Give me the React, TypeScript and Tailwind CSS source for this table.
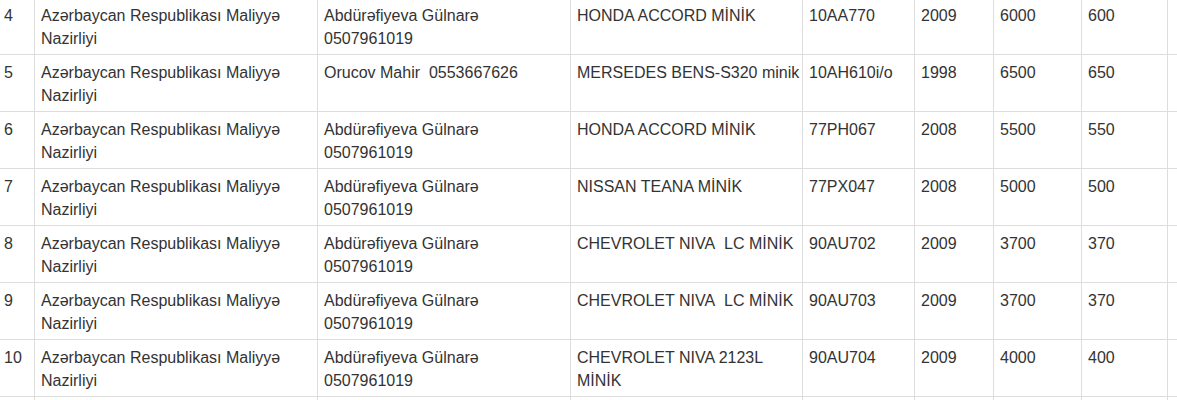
const rows = [
  ["4", "Azərbaycan Respublikası Maliyyə Nazirliyi", "Abdürəfiyeva Gülnarə 0507961019", "HONDA ACCORD MİNİK", "10AA770", "2009", "6000", "600"],
  ["5", "Azərbaycan Respublikası Maliyyə Nazirliyi", "Orucov Mahir\u00a0 0553667626", "MERSEDES BENS-S320 minik", "10AH610i/o", "1998", "6500", "650"],
  ["6", "Azərbaycan Respublikası Maliyyə Nazirliyi", "Abdürəfiyeva Gülnarə 0507961019", "HONDA ACCORD MİNİK", "77PH067", "2008", "5500", "550"],
  ["7", "Azərbaycan Respublikası Maliyyə Nazirliyi", "Abdürəfiyeva Gülnarə 0507961019", "NISSAN TEANA MİNİK", "77PX047", "2008", "5000", "500"],
  ["8", "Azərbaycan Respublikası Maliyyə Nazirliyi", "Abdürəfiyeva Gülnarə 0507961019", "CHEVROLET NIVA\u00a0 LC MİNİK", "90AU702", "2009", "3700", "370"],
  ["9", "Azərbaycan Respublikası Maliyyə Nazirliyi", "Abdürəfiyeva Gülnarə 0507961019", "CHEVROLET NIVA\u00a0 LC MİNİK", "90AU703", "2009", "3700", "370"],
  ["10", "Azərbaycan Respublikası Maliyyə Nazirliyi", "Abdürəfiyeva Gülnarə 0507961019", "CHEVROLET NIVA 2123L MİNİK", "90AU704", "2009", "4000", "400"],
];

const widths = [37, 283, 253, 232, 112, 79, 88, 86, 120];

export default function App() {
  return (
    <div className="h-[400px] w-full overflow-hidden bg-white">
      <table
        className="-mt-[3px] -ml-[3px] w-[1290px] table-fixed border-collapse text-[16px] leading-[22.8px] text-[#333]"
        style={{ fontFamily: '"Liberation Sans", Arial, sans-serif' }}
      >
        <colgroup>
          {widths.map((w, i) => (
            <col key={i} style={{ width: `${w}px` }} />
          ))}
        </colgroup>
        <tbody>
          {rows.map((row) => (
            <tr key={row[0]}>
              {row.map((cell, i) => (
                <td
                  key={i}
                  className="h-[57px] border border-[#dddddd] pt-[7px] pr-[2px] pb-[3px] pl-[6px] align-top"
                >
                  {cell}
                </td>
              ))}
              <td className="border border-[#dddddd] pt-[7px] pr-[2px] pb-[3px] pl-[6px] align-top" />
            </tr>
          ))}
          <tr>
            {widths.map((_, i) => (
              <td key={i} className="h-[57px] border border-[#dddddd] pt-[7px] pr-[2px] pb-[3px] pl-[6px] align-top" />
            ))}
          </tr>
        </tbody>
      </table>
    </div>
  );
}
